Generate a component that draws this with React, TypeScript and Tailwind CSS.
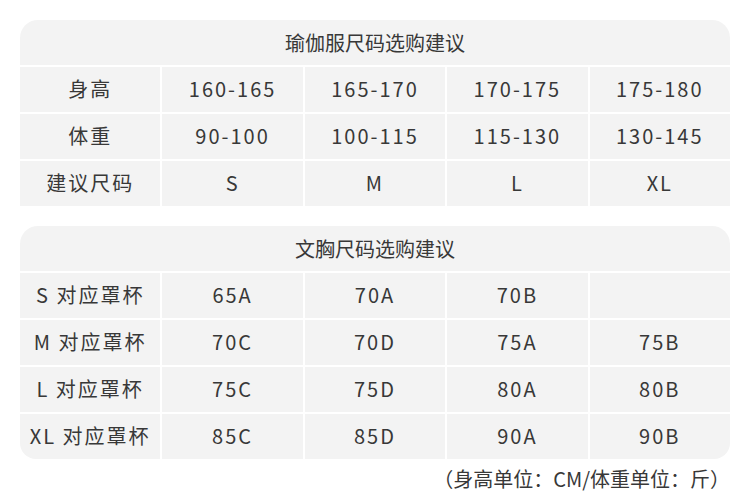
import React from "react";

const font = { fontFamily: '"Noto Sans CJK SC", "Noto Sans", sans-serif' };

const yoga = [
  ["身高", "160-165", "165-170", "170-175", "175-180"],
  ["体重", "90-100", "100-115", "115-130", "130-145"],
  ["建议尺码", "S", "M", "L", "XL"],
];

const bra = [
  ["S 对应罩杯", "65A", "70A", "70B", ""],
  ["M 对应罩杯", "70C", "70D", "75A", "75B"],
  ["L 对应罩杯", "75C", "75D", "80A", "80B"],
  ["XL 对应罩杯", "85C", "85D", "90A", "90B"],
];

function Table({ title, rows, roundBottom }: { title: string; rows: string[][]; roundBottom: boolean }) {
  return (
    <div
      className={
        "grid grid-cols-5 gap-[2px] bg-white overflow-hidden rounded-t-[18px] " +
        (roundBottom ? "rounded-b-[16px]" : "")
      }
    >
      <div className="col-span-5 h-[45px] bg-[#f3f3f3] flex items-center justify-center text-[20px] text-[#383838]">
        {title}
      </div>
      {rows.map((r, i) =>
        r.map((c, j) => (
          <div
            key={i + "-" + j}
            className="h-[45px] pb-[2px] bg-[#f3f3f3] flex items-center justify-center text-[20px] tracking-[2px] text-[#383838]"
          >
            {c}
          </div>
        ))
      )}
    </div>
  );
}

export default function App() {
  return (
    <div className="w-[750px] h-[504px] bg-white px-[20px] pt-[20px]" style={font}>
      <Table title="瑜伽服尺码选购建议" rows={yoga} roundBottom={false} />
      <div className="h-[20px]" />
      <Table title="文胸尺码选购建议" rows={bra} roundBottom={true} />
      <div className="mt-[6px] text-right text-[20px] leading-[28px] text-[#383838]">
        （身高单位：CM/体重单位：斤）
      </div>
    </div>
  );
}
